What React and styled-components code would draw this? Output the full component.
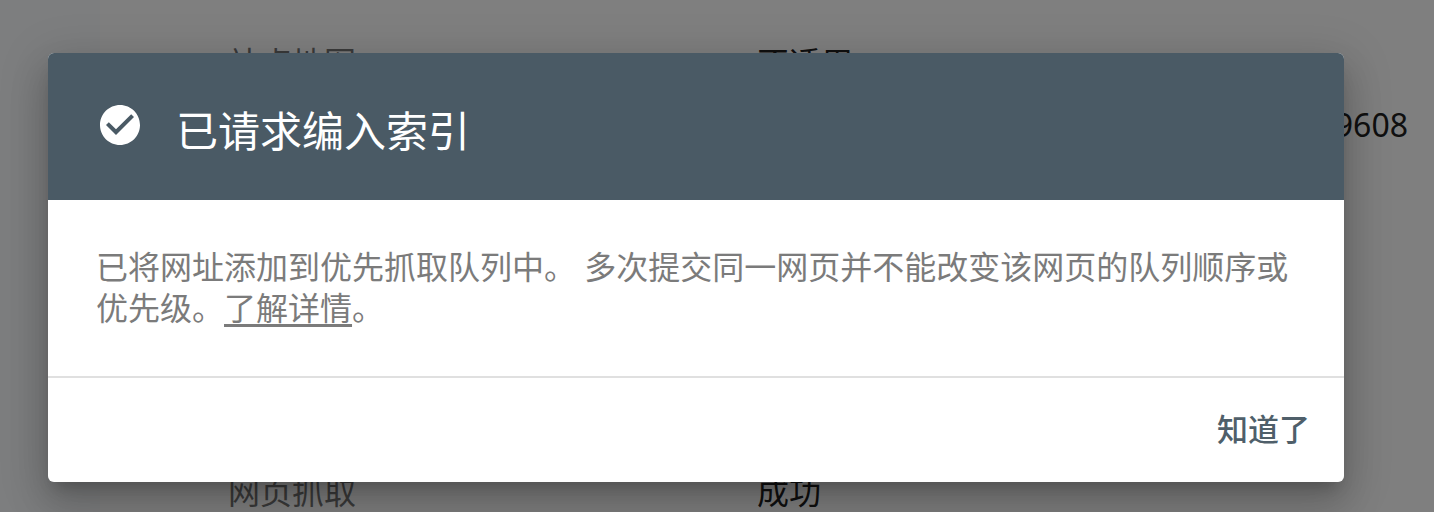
import styled, { createGlobalStyle } from "styled-components";

const GlobalStyle = createGlobalStyle`
  *, *::before, *::after {
    box-sizing: border-box;
  }
  html, body {
    margin: 0;
    padding: 0;
    height: 100%;
    overflow: hidden;
    background: #fff;
    font-family: "Noto Sans CJK SC", "Noto Sans", sans-serif;
  }
`;

const Page = styled.div`
  width: 1434px;
  height: 512px;
  display: flex;
  position: relative;
  overflow: hidden;
`;

const SideBar = styled.aside`
  width: 100px;
  flex: none;
  background: #fbfdfe;
  box-shadow: 1px 0 6px rgba(0, 0, 0, 0.35);
`;

const Content = styled.main`
  flex: 1;
  display: flex;
  flex-direction: column;
  background: #fff;
  padding: 39px 26px 0 128px;
`;

const Row = styled.div`
  display: grid;
  grid-template-columns: 529px 1fr;
  height: ${(p) => p.$height}px;
  font-size: 32px;
  line-height: 44px;
  color: #212121;
`;

const Label = styled.span`
  color: #757575;
`;

const Value = styled.span`
  text-align: ${(p) => (p.$end ? "right" : "left")};
  font-family: ${(p) => (p.$end ? '"Noto Sans", sans-serif' : "inherit")};
`;

const Scrim = styled.div`
  position: absolute;
  inset: 0;
  background: rgba(0, 0, 0, 0.5);
`;

const Dialog = styled.section`
  position: absolute;
  left: 48px;
  top: 53px;
  width: 1296px;
  height: 429px;
  display: flex;
  flex-direction: column;
  background: #fff;
  border-radius: 6px;
  overflow: hidden;
`;

const DialogShadow = styled.div`
  position: absolute;
  left: 48px;
  top: 53px;
  width: 1296px;
  height: 429px;
  border-radius: 6px;
  box-shadow: 0 24px 38px 3px rgba(0, 0, 0, 0.14),
    0 9px 46px 8px rgba(0, 0, 0, 0.12), 0 11px 15px -7px rgba(0, 0, 0, 0.2);
`;

const Header = styled.header`
  height: 147px;
  flex: none;
  display: flex;
  align-items: flex-start;
  gap: 32px;
  padding: 48px 48px 0;
  background: #4a5a65;
  color: #fff;
`;

const Title = styled.h2`
  margin: 0;
  font-size: 42px;
  line-height: 55px;
  font-weight: 400;
`;

const Body = styled.p`
  flex: 1;
  margin: 0;
  padding: 45px 48px 0 48px;
  font-size: 32px;
  line-height: 41px;
  word-spacing: 1px;
  color: #7b7b7b;
`;

const MoreLink = styled.a`
  color: inherit;
  text-decoration: underline;
  text-underline-offset: 4px;
`;

const Footer = styled.footer`
  height: 106px;
  flex: none;
  display: flex;
  justify-content: flex-end;
  align-items: center;
  padding: 0 34px 6px;
  border-top: 2px solid #e0e0e0;
`;

const DoneButton = styled.button`
  border: 0;
  padding: 0;
  background: none;
  font-family: inherit;
  font-size: 31px;
  font-weight: 500;
  color: #4f5f6a;
`;

const CheckCircle = () => (
  <svg width="48" height="48" viewBox="0 0 24 24" fill="#fff">
    <path d="M12 2C6.48 2 2 6.48 2 12s4.48 10 10 10 10-4.48 10-10S17.52 2 12 2zm-2 15l-5-5 1.41-1.41L10 14.17l7.59-7.59L19 8l-9 9z" />
  </svg>
);

export default function App() {
  return (
    <Page>
      <GlobalStyle />
      <SideBar />
      <Content>
        <Row $height={65}>
          <Label>站点地图</Label>
          <Value>不适用</Value>
        </Row>
        <Row $height={374}>
          <Label>引荐网页</Label>
          <Value $end>9608</Value>
        </Row>
        <Row $height={44}>
          <Label>网页抓取</Label>
          <Value>成功</Value>
        </Row>
      </Content>
      <Scrim />
      <DialogShadow />
      <Dialog>
        <Header>
          <CheckCircle />
          <Title>已请求编入索引</Title>
        </Header>
        <Body>
          已将网址添加到优先抓取队列中。 多次提交同一网页并不能改变该网页的队列顺序或优先级。
          <MoreLink href="#">了解详情</MoreLink>。
        </Body>
        <Footer>
          <DoneButton>知道了</DoneButton>
        </Footer>
      </Dialog>
    </Page>
  );
}
